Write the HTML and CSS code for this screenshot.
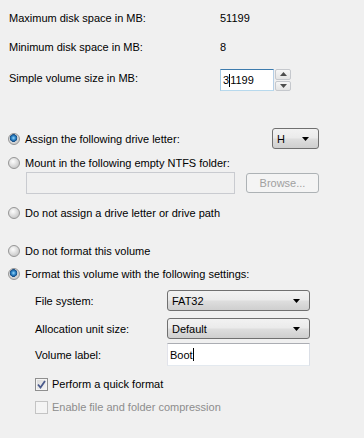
FILE: index.html
```html
<!DOCTYPE html>
<html lang="en">
<head>
    <meta charset="UTF-8">
    <title>Format Partition</title>
    <link rel="stylesheet" href="styles.css">
</head>
<body>
    <div class="page">
        <!-- size info -->
        <div class="info-row first">
            <span class="info-label">Maximum disk space in MB:</span>
            <span>51199</span>
        </div>
        <div class="info-row second">
            <span class="info-label">Minimum disk space in MB:</span>
            <span>8</span>
        </div>
        <div class="info-row third">
            <span class="info-label size-label">Simple volume size in MB:</span>
            <div class="spin">
                <div class="textbox focused spin-box">3<span class="caret"></span>1199</div>
                <div class="spin-buttons">
                    <div class="spin-btn"><svg width="7" height="4" viewBox="0 0 7 4"><path d="M0 4 L3.5 0 L7 4 Z" fill="#4d4d4d"/></svg></div>
                    <div class="spin-btn"><svg width="7" height="4" viewBox="0 0 7 4"><path d="M0 0 L7 0 L3.5 4 Z" fill="#4d4d4d"/></svg></div>
                </div>
            </div>
        </div>

        <!-- drive letter -->
        <div class="option-row assign-row">
            <label class="option"><span class="radio checked"></span>Assign the following drive letter:</label>
            <div class="combo letter-combo">H<svg width="7" height="4" viewBox="0 0 7 4"><path d="M0 0 L7 0 L3.5 4 Z" fill="#000"/></svg></div>
        </div>
        <div class="option-row mount-row">
            <label class="option"><span class="radio"></span>Mount in the following empty NTFS folder:</label>
        </div>
        <div class="folder-row">
            <div class="textbox disabled folder-box"></div>
            <div class="button disabled">Browse...</div>
        </div>
        <div class="option-row no-assign-row">
            <label class="option"><span class="radio"></span>Do not assign a drive letter or drive path</label>
        </div>

        <!-- format -->
        <div class="option-row no-format-row">
            <label class="option"><span class="radio"></span>Do not format this volume</label>
        </div>
        <div class="option-row format-row">
            <label class="option"><span class="radio checked"></span>Format this volume with the following settings:</label>
        </div>
        <div class="settings">
            <div class="setting fs-row">
                <span>File system:</span>
                <div class="combo">FAT32<svg width="7" height="4" viewBox="0 0 7 4"><path d="M0 0 L7 0 L3.5 4 Z" fill="#000"/></svg></div>
            </div>
            <div class="setting alloc-row">
                <span>Allocation unit size:</span>
                <div class="combo">Default<svg width="7" height="4" viewBox="0 0 7 4"><path d="M0 0 L7 0 L3.5 4 Z" fill="#000"/></svg></div>
            </div>
            <div class="setting label-row">
                <span>Volume label:</span>
                <div class="textbox label-box">Boot<span class="caret"></span></div>
            </div>
            <label class="check-row quick-row"><span class="checkbox checked"><svg width="9" height="9" viewBox="0 0 9 9"><path d="M1 4.5 L3.5 7.5 L8 1" fill="none" stroke="#4a5a8c" stroke-width="1.8"/></svg></span>Perform a quick format</label>
            <label class="check-row compress-row disabled-text"><span class="checkbox off"></span>Enable file and folder compression</label>
        </div>
    </div>
</body>
</html>
```

FILE: styles.css
```css
body {
    margin: 0;
    background-color: #f0f0f0;
    font-family: "Liberation Sans", Arial, sans-serif;
    font-size: 11px;
    color: #000;
}

.page {
    width: 364px;
    height: 438px;
    overflow: hidden;
}

/* size info */
.info-row {
    display: flex;
    align-items: center;
    height: 20px;
    padding-left: 9px;
}

.info-label {
    width: 211px;
}

.info-row.first {
    margin-top: 8px;
}

.info-row.second {
    margin-top: 9px;
}

.info-row.third {
    margin-top: 12px;
    height: 22px;
}

.size-label {
    margin-top: -4px;
}

.textbox {
    box-sizing: border-box;
    height: 22px;
    background-color: #fff;
    border: 1px solid #abadb3;
    border-left-color: #e2e3ea;
    border-right-color: #dbdfe6;
    border-bottom-color: #e3e9ef;
    display: flex;
    align-items: center;
    padding-left: 2px;
}

.textbox.focused {
    border-color: #569de5;
    border-top-color: #3d7bad;
    border-left-color: #a4c9e3;
    border-right-color: #b5cfe7;
    border-bottom-color: #b7d9ed;
}

.textbox.disabled {
    background-color: #f0f0f0;
    border-color: #c9cbd0;
}

.caret {
    display: inline-block;
    width: 1px;
    height: 13px;
    background-color: #000;
}

.spin {
    display: flex;
}

.spin-box {
    width: 54px;
}

.spin-buttons {
    display: flex;
    flex-direction: column;
    width: 16px;
    height: 22px;
    margin-left: 1px;
    gap: 1px;
}

.spin-btn {
    flex: 1;
    box-sizing: border-box;
    border: 1px solid #c5c8cd;
    border-radius: 2px;
    background: linear-gradient(#f6f6f6, #e4e4e4);
    display: flex;
    align-items: center;
    justify-content: center;
}

/* radio options */
.option-row {
    display: flex;
    align-items: center;
    justify-content: space-between;
    height: 14px;
    padding-left: 8px;
    padding-right: 45px;
}

.option {
    display: flex;
    align-items: center;
    gap: 5px;
}

.radio {
    box-sizing: border-box;
    width: 12px;
    height: 12px;
    border-radius: 50%;
    border: 1px solid #959595;
    background: radial-gradient(circle at 40% 35%, #fdfdfd 0, #e6e6e6 3px, #cfcfcf 6px);
}

.radio.checked {
    background:
        radial-gradient(circle at 45% 40%, #9ad7fa 0, #2f86c8 2px, #124a84 3.6px, transparent 4.1px),
        radial-gradient(circle at 40% 35%, #fdfdfd 0, #e6e6e6 3px, #cfcfcf 6px);
}

.assign-row {
    margin-top: 37px;
    height: 21px;
}

.mount-row {
    margin-top: 7px;
}

.folder-row {
    display: flex;
    align-items: center;
    gap: 11px;
    margin-top: 2px;
    padding-left: 26px;
    height: 22px;
}

.folder-box {
    width: 209px;
}

.button {
    box-sizing: border-box;
    width: 73px;
    height: 20px;
    border: 1px solid #adb2b5;
    border-radius: 3px;
    background-color: #f4f4f4;
    display: flex;
    align-items: center;
    justify-content: center;
}

.button.disabled {
    color: #a0a0a0;
}

.no-assign-row {
    margin-top: 12px;
}

.no-format-row {
    margin-top: 24px;
}

.format-row {
    margin-top: 9px;
}

/* combo boxes */
.combo {
    box-sizing: border-box;
    width: 143px;
    height: 21px;
    border: 1px solid #707070;
    border-radius: 3px;
    background: linear-gradient(#f2f2f2 0%, #ebebeb 45%, #dddddd 55%, #cfcfcf 100%);
    display: flex;
    align-items: center;
    justify-content: space-between;
    padding: 0 9px 0 4px;
}

.letter-combo {
    width: 47px;
}

/* format settings */
.settings {
    padding-left: 35px;
}

.setting {
    display: flex;
    align-items: center;
}

.setting > span {
    width: 132px;
}

.fs-row {
    margin-top: 9px;
    height: 21px;
}

.alloc-row {
    margin-top: 7px;
    height: 21px;
}

.label-row {
    margin-top: 4px;
    height: 23px;
}

.label-box {
    width: 143px;
    height: 23px;
}

.check-row {
    display: flex;
    align-items: center;
    gap: 4px;
    height: 14px;
}

.quick-row {
    margin-top: 11px;
}

.compress-row {
    margin-top: 9px;
}

.disabled-text {
    color: #8d8d8d;
}

.checkbox {
    box-sizing: border-box;
    width: 13px;
    height: 13px;
    border: 1px solid #8f8f8f;
    background: linear-gradient(135deg, #d9d9d9, #f7f7f7);
    box-shadow: inset 0 0 0 1px #f4f4f4;
    display: flex;
    align-items: center;
    justify-content: center;
}

.checkbox.off {
    border-color: #c4c4c4;
    background: #f4f4f4;
}
```
